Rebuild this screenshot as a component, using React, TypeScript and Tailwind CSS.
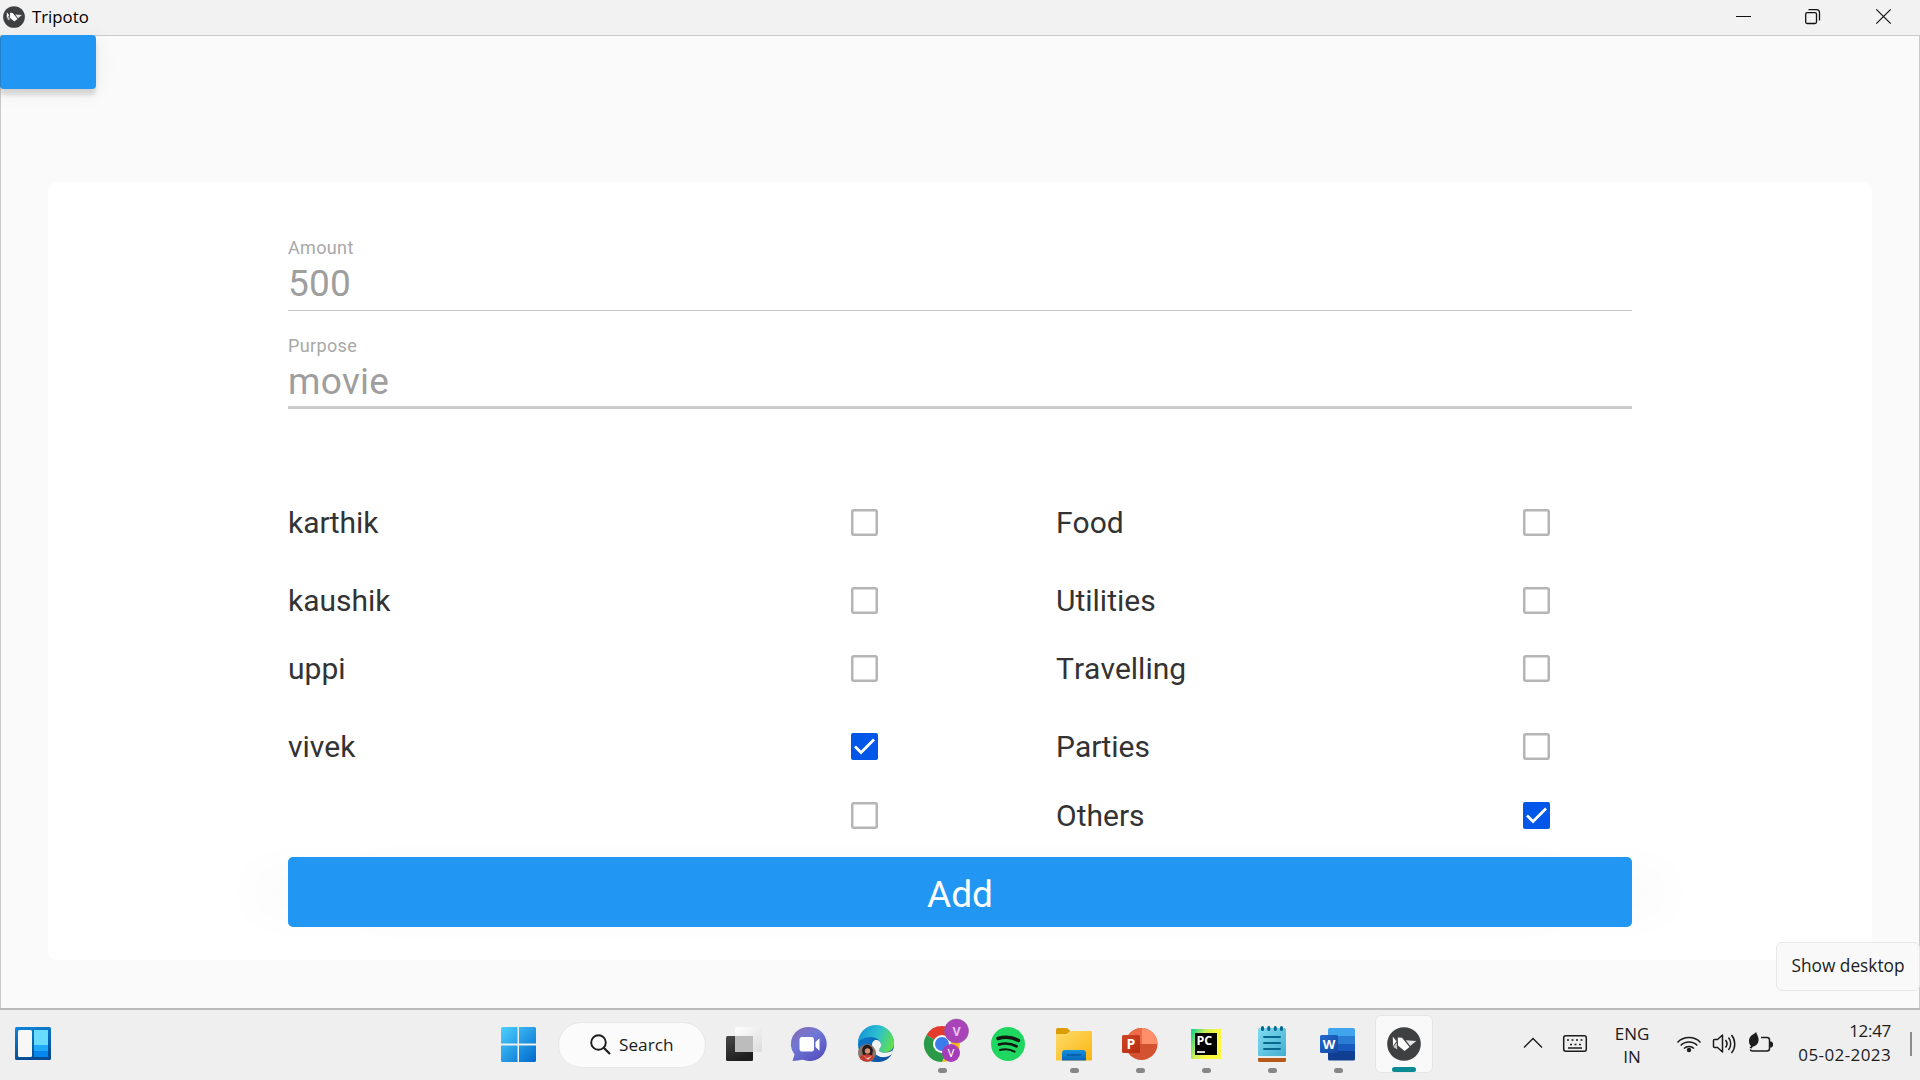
import type { ReactNode } from "react";

const ui = "font-['Open_Sans','Noto_Sans',sans-serif]";

function KivyMark({ className }: { className: string }) {
  return (
    <svg className={className} viewBox="0 0 34 34">
      <circle cx="17" cy="17" r="16.8" fill="#3f4042" />
      <path d="M5.800 9.800 9.600 14.200 6 19.200Z" fill="#fff" />
      <path d="M9.800 15.500 10.200 22.500 6.300 20Z" fill="#c9c9c9" />
      <path d="M10.800 10.500 15 10.800 22.500 20 17.500 24 11 18.500Z" fill="#fff" />
      <path d="M18.800 13.200 29.300 14 23.200 19Z" fill="#e4e4e4" />
    </svg>
  );
}

function TitleBar() {
  return (
    <header className="flex h-[36px] items-center border-b border-[#cbcbcb] bg-[#f2f2f2]">
      <KivyMark className="ml-[3px] mt-[-1px] size-[22px]" />
      <span className={`${ui} ml-[7px] mt-[-1px] text-[16.800px] leading-[20px] text-black`}>Tripoto</span>
      <svg className="ml-auto h-[35px] w-[200px]" viewBox="0 0 200 35" fill="none" stroke="#111">
        <path d="M16 16.5h15" />
        <rect x="85.7" y="12.7" width="10.8" height="10.8" rx="1.5" strokeWidth="1.3" />
        <path d="M88.5 9.6h8a3 3 0 0 1 3 3v8" strokeWidth="1.3" />
        <path d="m156.300 9.300 14.400 14.400m0-14.400-14.400 14.400" strokeWidth="1.2" />
      </svg>
    </header>
  );
}

function Field({ label, value, line }: { label: string; value: string; line: string }) {
  return (
    <div className={`flex flex-col ${line}`}>
      <span className="text-[18px] leading-[20px] tracking-[0.350px] text-[#a8a8a8]">{label}</span>
      <span className="mt-[7px] text-[37px] leading-[38px] tracking-[0.200px] text-[#9e9e9e]">{value}</span>
    </div>
  );
}

function Checkbox({ checked }: { checked: boolean }) {
  return (
    <svg className="size-[27px]" viewBox="0 0 27 27">
      {checked ? (
        <>
          <rect width="27" height="27" rx="2" fill="#0357e8" />
          <path d="m4 13.500 6 6L23 6.500" fill="none" stroke="#fff" strokeWidth="2.700" />
        </>
      ) : (
        <rect x="1.250" y="1.250" width="24.500" height="24.500" rx="1.500" fill="none" stroke="#b5b5b5" strokeWidth="2.500" />
      )}
    </svg>
  );
}

const rows = [
  { person: "karthik", personOn: false, category: "Food", categoryOn: false, space: "" },
  { person: "kaushik", personOn: false, category: "Utilities", categoryOn: false, space: "mt-[38px]" },
  { person: "uppi", personOn: false, category: "Travelling", categoryOn: false, space: "mt-[27.5px]" },
  { person: "vivek", personOn: true, category: "Parties", categoryOn: false, space: "mt-[38px]" },
  { person: "", personOn: false, category: "Others", categoryOn: true, space: "mt-[29.5px]" },
];

function ExpenseForm() {
  return (
    <main className="mx-[47px] mt-[93px] flex h-[778px] flex-col rounded-[9px] bg-white px-[240px] font-[Roboto,sans-serif] [font-kerning:none]">
      <div className="mt-[56px]">
        <Field label="Amount" value="500" line="h-[73px] border-b-[1.500px] border-[#c4c4c4]" />
      </div>
      <div className="mt-[25px]">
        <Field label="Purpose" value="movie" line="h-[73px] border-b-[3px] border-[#cbcbcb]" />
      </div>
      <div className="mt-[91px] text-[30px] text-[#333]">
        {rows.map((r) => (
          <div key={r.category} className={`grid h-[40px] grid-cols-[562.500px_205.500px_466.500px_27px] items-center ${r.space}`}>
            <span>{r.person}</span>
            <Checkbox checked={r.personOn} />
            <span>{r.category}</span>
            <Checkbox checked={r.categoryOn} />
          </div>
        ))}
      </div>
      <button className="mt-[24px] h-[70px] rounded-[5px] bg-[#2196f3] pt-[5px] text-[37px] text-white shadow-[-50px_0_50px_-18px_rgba(0,0,0,0.030),50px_0_50px_-18px_rgba(0,0,0,0.030)]">
        Add
      </button>
    </main>
  );
}

function Cell({ children, dot }: { children: ReactNode; dot?: boolean }) {
  return (
    <svg className="h-[70px] w-[66px] shrink-0" viewBox="0 0 66 70">
      {children}
      {dot && <rect x="29" y="58" width="9" height="5" rx="2.500" fill="#868686" />}
    </svg>
  );
}

function Gradients() {
  return (
    <defs>
      <linearGradient id="win" x1="0" y1="0" x2="1" y2="1">
        <stop stopColor="#4cd0ff" />
        <stop offset="1" stopColor="#0068cc" />
      </linearGradient>
      <linearGradient id="dark" x1="0" y1="0" x2="0.500" y2="1">
        <stop stopColor="#484848" />
        <stop offset="1" stopColor="#1c1c1c" />
      </linearGradient>
      <linearGradient id="light" x1="0" y1="0" x2="1" y2="1">
        <stop stopColor="#fff" />
        <stop offset="1" stopColor="#dcdcdc" />
      </linearGradient>
      <linearGradient id="chat" x1="0" y1="0" x2="0.700" y2="1">
        <stop stopColor="#8a66ae" />
        <stop offset="0.450" stopColor="#7079d6" />
        <stop offset="1" stopColor="#5551c0" />
      </linearGradient>
      <linearGradient id="edgeTop" x1="0" y1="0.300" x2="1" y2="0.600">
        <stop stopColor="#1595d8" />
        <stop offset="0.500" stopColor="#2bbfd0" />
        <stop offset="1" stopColor="#62e04c" />
      </linearGradient>
      <linearGradient id="edgeLow" x1="0" y1="0" x2="1" y2="1">
        <stop stopColor="#0c85d8" />
        <stop offset="1" stopColor="#0c4c93" />
      </linearGradient>
      <linearGradient id="folder" x1="0" y1="0" x2="1" y2="1">
        <stop stopColor="#ffdc6b" />
        <stop offset="1" stopColor="#f9b50e" />
      </linearGradient>
      <linearGradient id="clip" x1="0" y1="0" x2="0" y2="1">
        <stop stopColor="#1690e0" />
        <stop offset="1" stopColor="#0667b9" />
      </linearGradient>
      <linearGradient id="pc" x1="0" y1="0.200" x2="0.700" y2="0.500">
        <stop stopColor="#20d789" />
        <stop offset="0.500" stopColor="#c8ef55" />
        <stop offset="1" stopColor="#fcf83e" />
      </linearGradient>
      <linearGradient id="note" x1="0" y1="0" x2="1" y2="1">
        <stop stopColor="#80dcf2" />
        <stop offset="1" stopColor="#45aed0" />
      </linearGradient>
      <linearGradient id="ppt" x1="0" y1="0" x2="1" y2="1">
        <stop stopColor="#cf4526" />
        <stop offset="1" stopColor="#b42d12" />
      </linearGradient>
      <linearGradient id="word" x1="0" y1="0" x2="1" y2="1">
        <stop stopColor="#2368c8" />
        <stop offset="1" stopColor="#1549a6" />
      </linearGradient>
    </defs>
  );
}

function TaskIcons() {
  return (
    <div className="flex">
      <Cell>
        <Gradients />
        <path fill="url(#win)" d="M16.500 17H31.500V33.500H15V18.500Q15 17 16.500 17ZM33 17H48.500Q50 17 50 18.500V33.500H33ZM15 35.500H31.500V52H16.500Q15 52 15 50.500ZM33 35.500H50V50.500Q50 52 48.500 52H33Z" />
      </Cell>
      <div className="flex w-[159px] items-center justify-center">
        <div className="ml-[1px] mt-[-1px] flex h-[46px] w-[148px] items-center rounded-full border-[1.500px] border-[#e8e8e8] bg-[#fbfbfb] pl-[31px]">
          <svg className="size-[21px]" viewBox="0 0 21 21" fill="none" stroke="#1c1c1c">
            <circle cx="8.500" cy="8.500" r="7.300" strokeWidth="1.900" />
            <path d="m13.700 13.700 6.300 6.300" strokeWidth="2.200" />
          </svg>
          <span className="ml-[8px] text-[17.200px] leading-[24px] text-[#1c1c1c]">Search</span>
        </div>
      </div>
      <Cell>
        <rect x="15" y="26" width="27" height="25" rx="1.500" fill="url(#dark)" />
        <rect x="24" y="17" width="27" height="25" rx="1.500" fill="url(#light)" />
        <path d="M24 26H42V42H24Z" fill="#bcbcbc" />
      </Cell>
      <Cell>
        <g transform="translate(0.500 0)">
          <path d="M32 17a17 17 0 1 1-5.500 33c-3.500-1-6 1-11.500 1l2-6.500A17 17 0 0 1 32 17Z" fill="url(#chat)" />
          <rect x="22" y="27" width="14.500" height="14.500" rx="2.500" fill="#fff" />
          <path d="m38 32 4-3.700v12.400L38 37Z" fill="#fff" />
        </g>
      </Cell>
      <Cell>
        <circle cx="33" cy="34" r="18" fill="url(#edgeLow)" />
        <path d="M15 33A18 18 0 0 1 51 33c0 6-4 9.500-9 9.500-4 0-6-1-6-2.500 0-1.500 2-2 2-5 0-4-4-8-10-8-7 0-12 3-13 6Z" fill="url(#edgeTop)" />
        <path d="M29 35c0-4 3-5.500 5-5 3 .7 4.500 3.200 4 6-.4 2-2 2.500-2 4 0 2 4 3 8 2.500 3-.4 5-1.500 6-3l-2 6c-2 1.500-5 2.500-9 2-6-.8-10-6.500-10-12.500Z" fill="#f2f3f3" />
        <path d="M29 35c0 7 5 12.500 11 12.300 4-.1 7-1.500 9-3.300-3 5-8 8-14 8-6-2-9-8-8-14Z" fill="#0f56a4" />
        <circle cx="24" cy="43" r="9" fill="#8b7468" />
        <path d="M19 40c1-7 9-7 11 0l-1 6h-9Z" fill="#261b1b" />
        <circle cx="24.500" cy="41" r="2.700" fill="#d39476" />
        <path d="M16.500 47c4-3 10-4 15 0a9 9 0 0 1-14 2Z" fill="#c63c32" />
        <path d="M20 45l4 3 5-2-4 4Z" fill="#edc2a5" />
      </Cell>
      <Cell dot>
        <path d="M33 34 17.400 25A18 18 0 0 1 48.600 25Z" fill="#e33b2e" />
        <path d="M33 34 17.400 25A18 18 0 0 0 33 52L40 38Z" fill="#2a9a48" />
        <path d="M33 26H48.900A18 18 0 0 1 33 52L41 38Z" fill="#fbbc16" />
        <circle cx="33" cy="34" r="9" fill="#fff" />
        <circle cx="33" cy="34" r="7" fill="#3b7ded" />
        <circle cx="47.500" cy="21" r="12" fill="#a944b8" stroke="#8f5d98" strokeWidth="0.600" />
        <text x="47.500" y="25.500" fontSize="12.500" fontWeight="700" textAnchor="middle" fill="#e7c4ec" fontFamily="Roboto">V</text>
        <circle cx="42" cy="43" r="9" fill="#a63db8" />
        <text x="42" y="47" fontSize="11" textAnchor="middle" fill="#fff" fontFamily="Roboto">V</text>
      </Cell>
      <Cell>
        <circle cx="33" cy="34" r="17" fill="#1fd760" />
        <g fill="none" stroke="#12170f" strokeLinecap="round">
          <path d="M23 28.500c7-2 14.500-1.400 20.500 2" strokeWidth="3.400" />
          <path d="M24 34.500c6-1.700 12.300-1 17.500 1.800" strokeWidth="2.700" />
          <path d="M25 40c5-1.300 10.300-.7 14.500 1.700" strokeWidth="2.100" />
        </g>
      </Cell>
      <Cell dot>
        <path d="M15 19.500Q15 18 16.500 18H26l3.500 3-4 3.500H15Z" fill="#dc9e08" />
        <path d="M15 24H26l4-3H50Q51 21 51 22.500V50.500H15Z" fill="url(#folder)" />
        <path d="M21 50.500V43q0-3 3-3H42q3 0 3 3v7.500Z" fill="url(#clip)" />
        <path d="M26 45H40" stroke="#0755a0" strokeWidth="1.400" />
      </Cell>
      <Cell dot>
        <circle cx="34.500" cy="34" r="16" fill="#d35230" />
        <path d="M34.500 34V18a16 16 0 0 1 16 16Z" fill="#ff8f6b" />
        <path d="M34.500 34V18a16 16 0 0 0-16 16Z" fill="#ed6c47" />
        <rect x="15" y="25" width="18" height="18" rx="1.500" fill="url(#ppt)" />
        <text x="24" y="39" fontSize="14" fontWeight="700" textAnchor="middle" fill="#fff" fontFamily="Open Sans">P</text>
      </Cell>
      <Cell dot>
        <path d="M18 19H48V49H18Z" fill="url(#pc)" />
        <path d="M22 23H44V45H22Z" fill="#000" />
        <path d="M24 42H32" stroke="#fff" strokeWidth="1.700" />
        <text x="23.500" y="34.500" fontSize="12.500" fontWeight="700" fill="#fff" fontFamily="Open Sans">PC</text>
      </Cell>
      <Cell dot>
        <path d="M19 45H47V49H19Z" fill="#e8eef0" />
        <path d="M19 48H47V50.500Q47 52 45.500 52H20.500Q19 52 19 50.500Z" fill="#b55a19" />
        <path d="M19 19.500Q19 18 20.500 18H45.500Q47 18 47 19.500V46H19Z" fill="url(#note)" />
        <path d="M25 27H41M25 33H41M25 39H41" stroke="#07688c" strokeWidth="2" strokeLinecap="round" />
        <path d="M23.500 17.500v2M29.800 17.500v2M36.300 17.500v2M42.500 17.500v2" stroke="#07688c" strokeWidth="3" strokeLinecap="round" />
      </Cell>
      <Cell dot>
        <path d="M23 20Q23 18 24.500 18H48.500Q50 18 50 20V26H23Z" fill="#41a5ee" />
        <path d="M23 26H50V34H23Z" fill="#2b7cd3" />
        <path d="M23 34H50V41H23Z" fill="#185abd" />
        <path d="M23 41H50V49Q50 50.500 48.500 50.500H24.500Q23 50.500 23 49Z" fill="#103f91" />
        <rect x="15" y="25" width="18" height="18" rx="1.500" fill="url(#word)" />
        <text x="24" y="38.500" fontSize="13" fontWeight="700" textAnchor="middle" fill="#fff" fontFamily="Open Sans">W</text>
      </Cell>
      <div className="flex w-[66px] justify-center">
        <div className="mt-[5px] flex h-[58px] w-[58px] flex-col items-center rounded-[6px] border border-[#e6e6e6] bg-[#f9f9f9]">
          <KivyMark className="mt-[11px] size-[34px]" />
          <div className="mt-auto h-[5px] w-[24px] rounded-full bg-[#078a92]" />
        </div>
      </div>
    </div>
  );
}

function Tray() {
  return (
    <div className="ml-auto flex h-[70px] items-start text-[#1c1c1c]">
      <svg className="h-[70px] w-[90px]" viewBox="1510 1010 90 70" fill="none" stroke="#1c1c1c">
        <path d="m1524 1047.500 9-9 9 9" strokeWidth="1.400" />
        <rect x="1563.700" y="1035.700" width="22.600" height="15.600" rx="2" strokeWidth="1.500" />
        <path d="M1567 1040h2m2.500 0h2m2.500 0h2m2.500 0h2M1570 1044.500h2m2.500 0h2m2.500 0h2M1568 1048h14" strokeWidth="1.600" />
      </svg>
      <div className="mt-[12px] w-[64px] text-center text-[17px] leading-[23px]">
        ENG
        <br />
        IN
      </div>
      <svg className="h-[70px] w-[116px]" viewBox="1664 1010 116 70" fill="none" stroke="#1c1c1c">
        <circle cx="1689" cy="1050" r="2.200" fill="#1c1c1c" stroke="none" />
        <path d="M1677.500 1042.500a16 16 0 0 1 23 0M1680.700 1045.500a11.500 11.500 0 0 1 16.600 0M1684 1048.500a7 7 0 0 1 10 0" strokeWidth="1.500" />
        <path d="M1713.500 1040.500v6q0 1 1 1h3l5 4.500v-17l-5 4.500h-3q-1 0-1 1Z" strokeWidth="1.500" strokeLinejoin="round" />
        <path d="M1725.500 1040a6 6 0 0 1 0 7.500M1728.500 1037.500a10 10 0 0 1 0 12.500M1731.500 1035a14 14 0 0 1 0 18" strokeWidth="1.500" />
        <path d="M1761 1037.500h6q2.500 0 2.500 2.500v8.500q0 2.500-2.500 2.500h-14q-2.500 0-2.500-1.500" strokeWidth="1.500" />
        <path d="M1770 1041.500h1.500l1.500 1.500v3l-1.500 1.500h-1.500Z" fill="#1c1c1c" stroke="none" />
        <path d="M1756 1032c-1 2-7 3-7 9 0 3 1 4 2 5l-1.500 2 2 .5 1.500-2c4-.5 6-4 5.500-8-.3-2-1.500-4-2.500-6.500Z" fill="#1c1c1c" stroke="none" />
      </svg>
      <div className="mt-[9px] flex w-[111px] flex-col items-end text-[17px] leading-[24px]">
        <span className="tracking-[-0.300px]">12:47</span>
        <span className="tracking-[0.400px]">05-02-2023</span>
      </div>
      <div className="ml-[19px] mr-[8px] mt-[22px] h-[24px] w-[2px] bg-[#8c8c8c]" />
    </div>
  );
}

function Taskbar() {
  return (
    <footer className={`${ui} flex h-[72px] border-t-2 border-[#bababa] bg-[#efefef]`}>
      <svg className="ml-[15px] mr-[435px] h-[70px] w-[36px]" viewBox="0 0 36 70">
        <defs>
          <linearGradient id="wid" x1="0" y1="0" x2="0.300" y2="1">
            <stop stopColor="#0d86dc" />
            <stop offset="1" stopColor="#074c92" />
          </linearGradient>
        </defs>
        <rect y="17" width="36" height="33" rx="1.500" fill="url(#wid)" />
        <rect x="3" y="20" width="14" height="27" rx="1.500" fill="#f7f7f7" />
        <path d="M19 20H33V35H19Z" fill="#68dbff" />
        <path d="M19 35H33V41H19Z" fill="#1fa9fa" />
        <path d="M19 41H33V47H19Z" fill="#0786eb" />
      </svg>
      <TaskIcons />
      <Tray />
    </footer>
  );
}

export default function App() {
  return (
    <div className="relative h-[1080px] w-[1920px] overflow-hidden bg-[#fafafa]">
      <TitleBar />
      <div className="flow-root h-[972px] border-x border-[#c9c9c9]">
        <div className="relative ml-[-1px] mt-[-1px] h-[54px] w-[96px] rounded-[4px] border-l border-[#2381cb] bg-[#2196f3] shadow-[0_6px_4px_rgba(0,0,0,0.130),0_2px_24px_rgba(0,0,0,0.060)]" />
        <ExpenseForm />
      </div>
      <Taskbar />
      <div className={`${ui} absolute left-[1776px] top-[942px] flex h-[49px] w-[144px] items-center justify-center rounded-[6px] border-[1.500px] border-[#e8e8e8] bg-[#f9f9f9] pb-[2px] text-[17.300px] text-[#1c1c1c]`}>
        Show desktop
      </div>
    </div>
  );
}
